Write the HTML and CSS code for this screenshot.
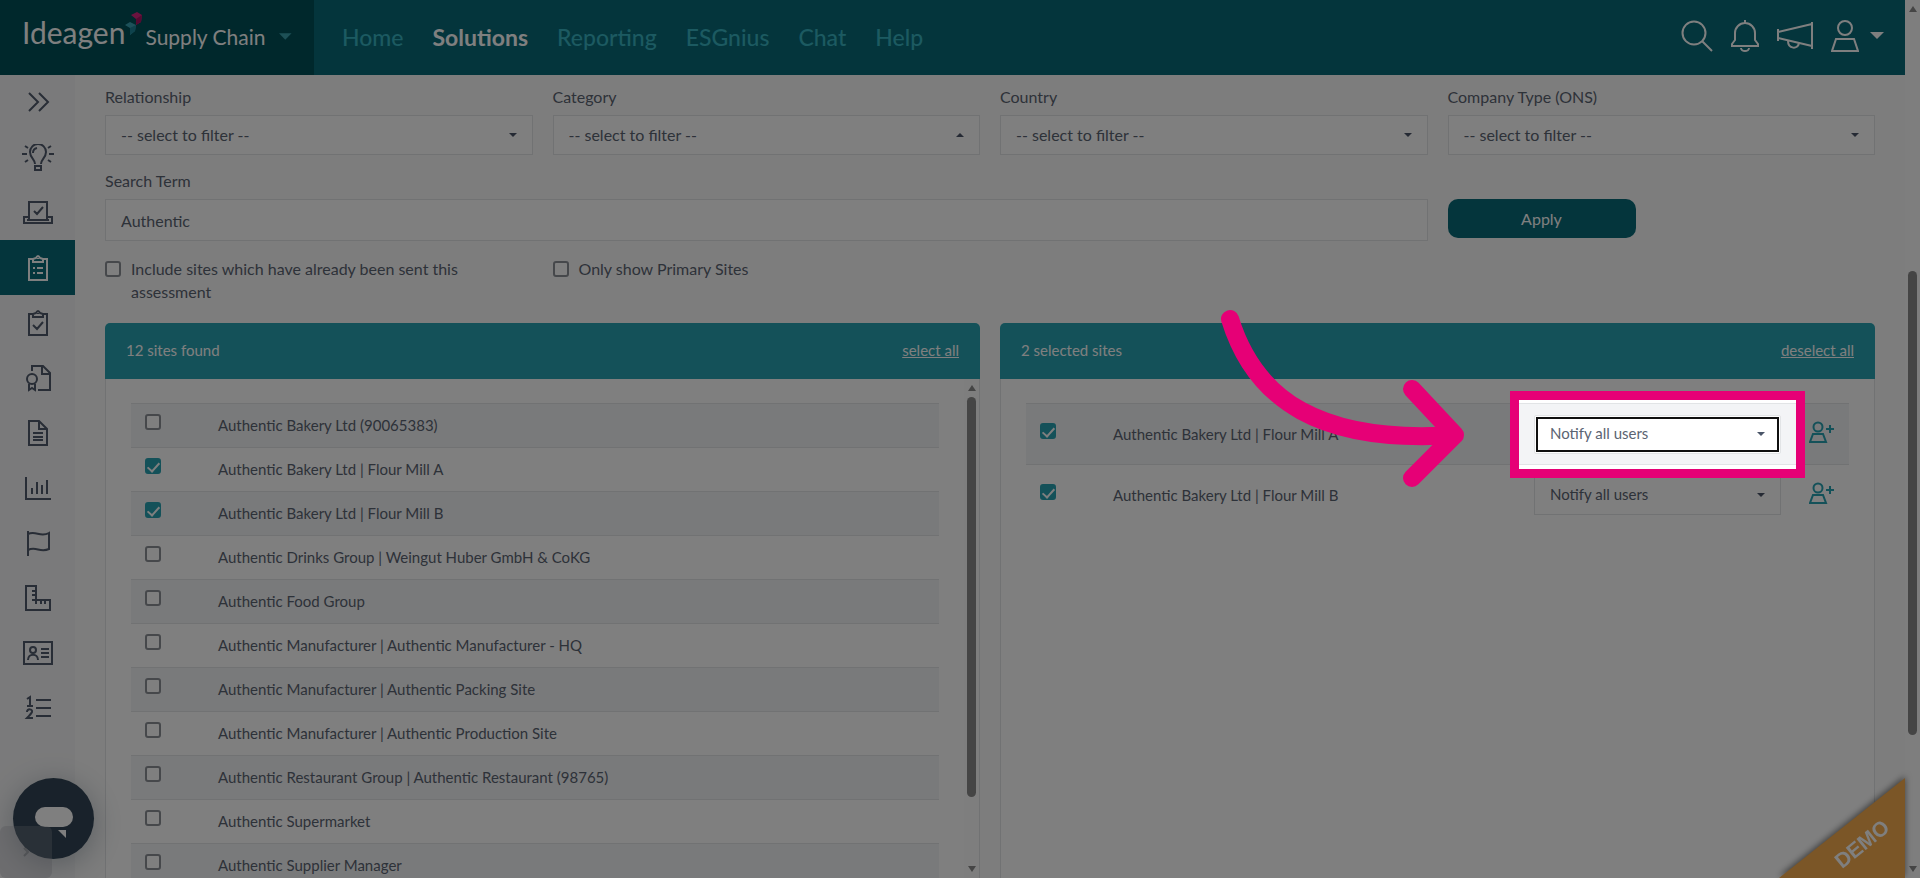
FILE: index.html
```
<!DOCTYPE html>
<html lang="en">
<head>
    <meta charset="UTF-8">
    <meta name="viewport" content="width=device-width, initial-scale=1.0">
    <title>Ideagen Supply Chain</title>
    <link rel="stylesheet" href="styles.css">
</head>
<body>
    <div class="app">
        <header class="topbar">
            <a class="brand" href="#">
                <span class="brand-name">Ideagen</span>
                <svg class="brand-mark" width="18" height="24" viewBox="0 0 18 24">
                    <path d="M6 3l6-3 5 3-1 7-5 3V7z" fill="#d6267f"/>
                    <path d="M11 7l6-4-1 7-5 3z" fill="#a81562"/>
                    <path d="M0 13l5-3 6 3-1 6-5 4v-7z" fill="#3aa3b4"/>
                    <path d="M5 16l6-3-1 6-5 4z" fill="#1d8598"/>
                </svg>
                <span class="brand-product">Supply Chain</span>
                <svg class="brand-caret" width="14" height="7" viewBox="0 0 14 7"><path d="M0 0h14L7 7z" fill="currentColor"/></svg>
            </a>
            <nav class="main-nav">
                <a href="#">Home</a>
                <a href="#" class="current">Solutions</a>
                <a href="#">Reporting</a>
                <a href="#">ESGnius</a>
                <a href="#">Chat</a>
                <a href="#">Help</a>
            </nav>
            <div class="tools">
                <button type="button" aria-label="Search"><svg class="icon" width="32" height="32" viewBox="0 0 32 32"><circle cx="13" cy="13" r="11.5"/><path d="M21 21l10 10"/></svg></button>
                <button type="button" aria-label="Notifications"><svg class="icon" width="28" height="32" viewBox="0 0 28 32"><path d="M14 0v3M4 20v-7a10 10 0 0 1 20 0v7l3 4v2H1v-2z"/><path d="M10 28a4 3 0 0 0 8 0"/></svg></button>
                <button type="button" aria-label="Announcements"><svg class="icon" width="36" height="32" viewBox="0 0 36 32"><path d="M1 9v12M35 2v27M1 12L35 4M1 18l34 8M11 21c0 8 10 9 11 2"/></svg></button>
                <button type="button" aria-label="Account"><svg class="icon" width="28" height="32" viewBox="0 0 28 32"><circle cx="14" cy="8" r="7"/><path d="M5 19h18l4 12H1z"/></svg><svg class="tools-caret" width="14" height="7" viewBox="0 0 14 7"><path d="M0 0h14L7 7z" fill="currentColor"/></svg></button>
            </div>
        </header>

        <div class="workspace">
            <nav class="sidebar">
                <a href="#" aria-label="Expand"><svg class="icon" width="32" height="28" viewBox="0 0 32 28"><path d="M7 4l9 9-9 9M17 4l9 9-9 9"/></svg></a>
                <a href="#" aria-label="Insights"><svg class="icon" width="32" height="28" viewBox="0 0 32 28"><path d="M13 20c0-5-5-6-5-12a8 8 0 0 1 16 0c0 6-5 7-5 12M13 22h6v4h-6zM11 9a5 5 0 0 1 4-5M0 10h5M27 10h5M3 2l3 2M29 2l-3 2M3 18l3-2M29 18l-3-2"/></svg></a>
                <a href="#" aria-label="Assessments"><svg class="icon" width="32" height="28" viewBox="0 0 32 28"><path d="M7 21V3h18v18M6 18H2v6h28v-6h-4M5 21h22M12 12l3 3 6-7"/></svg></a>
                <a href="#" class="active" aria-label="Send assessment"><svg class="icon" width="32" height="28" viewBox="0 0 32 28"><path d="M11 5H7v21h18V5h-4M11 8V5l3-1q2-4 4 0l3 1v3zM11 14h2M15 14h6M11 19h2M15 19h6M16 4v1"/></svg></a>
                <a href="#" aria-label="Tasks"><svg class="icon" width="32" height="28" viewBox="0 0 32 28"><path d="M11 5H7v21h18V5h-4M11 8V5l3-1q2-4 4 0l3 1v3zM11 16l4 4 6-7M16 4v1"/></svg></a>
                <a href="#" aria-label="Certificates"><svg class="icon" width="32" height="28" viewBox="0 0 32 28"><circle cx="10" cy="15" r="5"/><path d="M7 20v6l3-2 3 2v-6M10 7V2h11l7 7v17H16M20 2v8h8"/></svg></a>
                <a href="#" aria-label="Documents"><svg class="icon" width="32" height="28" viewBox="0 0 32 28"><path d="M7 2h10l8 8v16H7zM17 2v8h8M11 14h10M11 18h10M11 21h10"/></svg></a>
                <a href="#" aria-label="Charts"><svg class="icon" width="32" height="28" viewBox="0 0 32 28"><path d="M4 3v22h25M10 20v-6M15 20V8M20 20v-9M25 20V6"/></svg></a>
                <a href="#" aria-label="Flags"><svg class="icon" width="32" height="28" viewBox="0 0 32 28"><path d="M6 2v25M6 5c8-4 12 4 21-1v16c-9 4-13-3-21 1"/></svg></a>
                <a href="#" aria-label="Measures"><svg class="icon" width="32" height="28" viewBox="0 0 32 28"><path d="M4 2h10v14h14v10H4zM14 16v4M14 16h-4M14 7h-4M14 11h-4M19 16v4M23 16v4"/></svg></a>
                <a href="#" aria-label="Contacts"><svg class="icon" width="32" height="28" viewBox="0 0 32 28"><path d="M2 3h28v22H2zM6 21c0-7 10-7 10 0M19 10h8M19 14h8M19 18h8"/><circle cx="11" cy="11" r="3"/></svg></a>
                <a href="#" aria-label="Order"><svg class="icon" width="32" height="28" viewBox="0 0 32 28"><path d="M5 5l3-2v9M5 12h6M5 18c0-4 6-3 5 0q-1 2-5 6h6M14 6h15M14 14h15M14 22h15"/></svg></a>
            </nav>

            <main class="content">
                <form class="filters">
                    <div class="field">
                        <label for="relationship">Relationship</label>
                        <span class="select"><select id="relationship"><option>-- select to filter --</option></select></span>
                    </div>
                    <div class="field">
                        <label for="category">Category</label>
                        <span class="select select-open"><select id="category"><option>-- select to filter --</option></select></span>
                    </div>
                    <div class="field">
                        <label for="country">Country</label>
                        <span class="select"><select id="country"><option>-- select to filter --</option></select></span>
                    </div>
                    <div class="field">
                        <label for="company-type">Company Type (ONS)</label>
                        <span class="select"><select id="company-type"><option>-- select to filter --</option></select></span>
                    </div>
                    <div class="field field-search">
                        <label for="search-term">Search Term</label>
                        <input type="text" id="search-term" value="Authentic">
                    </div>
                    <button type="button" class="apply">Apply</button>
                    <label class="check"><input type="checkbox"><span>Include sites which have already been sent this assessment</span></label>
                    <label class="check"><input type="checkbox"><span>Only show Primary Sites</span></label>
                </form>

                <div class="panels">
                    <section class="panel">
                        <div class="panel-head"><span>12 sites found</span><a href="#">select all</a></div>
                        <div class="panel-body scrolled">
                            <div class="list">
                                <table class="sites">
                                    <tr><td class="pick"><input type="checkbox" id="s1"></td><td><label for="s1">Authentic Bakery Ltd (90065383)</label></td></tr>
                                    <tr><td class="pick"><input type="checkbox" id="s2" checked></td><td><label for="s2">Authentic Bakery Ltd | Flour Mill A</label></td></tr>
                                    <tr><td class="pick"><input type="checkbox" id="s3" checked></td><td><label for="s3">Authentic Bakery Ltd | Flour Mill B</label></td></tr>
                                    <tr><td class="pick"><input type="checkbox" id="s4"></td><td><label for="s4">Authentic Drinks Group | Weingut Huber GmbH &amp; CoKG</label></td></tr>
                                    <tr><td class="pick"><input type="checkbox" id="s5"></td><td><label for="s5">Authentic Food Group</label></td></tr>
                                    <tr><td class="pick"><input type="checkbox" id="s6"></td><td><label for="s6">Authentic Manufacturer | Authentic Manufacturer - HQ</label></td></tr>
                                    <tr><td class="pick"><input type="checkbox" id="s7"></td><td><label for="s7">Authentic Manufacturer | Authentic Packing Site</label></td></tr>
                                    <tr><td class="pick"><input type="checkbox" id="s8"></td><td><label for="s8">Authentic Manufacturer | Authentic Production Site</label></td></tr>
                                    <tr><td class="pick"><input type="checkbox" id="s9"></td><td><label for="s9">Authentic Restaurant Group | Authentic Restaurant (98765)</label></td></tr>
                                    <tr><td class="pick"><input type="checkbox" id="s10"></td><td><label for="s10">Authentic Supermarket</label></td></tr>
                                    <tr><td class="pick"><input type="checkbox" id="s11"></td><td><label for="s11">Authentic Supplier Manager</label></td></tr>
                                </table>
                            </div>
                            <div class="scrollbar list-scroll"><i class="arrow-up"></i><div class="track"><div class="thumb"></div></div><i class="arrow-down"></i></div>
                        </div>
                    </section>

                    <section class="panel">
                        <div class="panel-head"><span>2 selected sites</span><a href="#">deselect all</a></div>
                        <div class="panel-body">
                            <div class="selected">
                                <table class="sites">
                                    <tr>
                                        <td class="pick"><input type="checkbox" id="p1" checked></td>
                                        <td><label for="p1">Authentic Bakery Ltd | Flour Mill A</label></td>
                                        <td class="notify">
                                            <span class="select select-focus">
                                                <select aria-label="Notify for Flour Mill A"><option>Notify all users</option></select>
                                                <span class="spotlight"></span>
                                                <svg class="pointer" width="265" height="190" viewBox="0 0 265 190"><path d="M20 14C45 95 110 139 245 130M202 84l43 46-43 43"/></svg>
                                            </span>
                                        </td>
                                        <td class="add"><button type="button" aria-label="Add user"><svg class="icon" width="25" height="22" viewBox="0 0 25 22"><circle cx="9" cy="6" r="4.5"/><path d="M4 13h10l3 8H1zM17 8h8M21 4v8"/></svg></button></td>
                                    </tr>
                                    <tr>
                                        <td class="pick"><input type="checkbox" id="p2" checked></td>
                                        <td><label for="p2">Authentic Bakery Ltd | Flour Mill B</label></td>
                                        <td class="notify"><span class="select"><select aria-label="Notify for Flour Mill B"><option>Notify all users</option></select></span></td>
                                        <td class="add"><button type="button" aria-label="Add user"><svg class="icon" width="25" height="22" viewBox="0 0 25 22"><circle cx="9" cy="6" r="4.5"/><path d="M4 13h10l3 8H1zM17 8h8M21 4v8"/></svg></button></td>
                                    </tr>
                                </table>
                            </div>
                        </div>
                    </section>
                </div>
            </main>
        </div>

        <button type="button" class="chat" aria-label="Open chat">
            <svg width="38" height="32" viewBox="0 0 38 32"><rect width="38" height="20" rx="10"/><path d="M23 23h8v8z"/></svg>
        </button>
        <div class="drawer"><svg class="icon" width="6" height="10" viewBox="0 0 6 10"><path d="M1 1l4 4-4 4"/></svg></div>
        <svg class="ribbon" width="134" height="108" viewBox="0 0 134 108">
            <path d="M8 108L134 8v100z"/>
            <text x="91" y="81" transform="rotate(-39 91 74)">DEMO</text>
        </svg>
    </div>
    <div class="scrollbar page-scroll"><i class="arrow-up"></i><div class="track"><div class="thumb"></div></div><i class="arrow-down"></i></div>
</body>
</html>
```
FILE: styles.css
```
* {
    box-sizing: border-box;
}
body {
    margin: 0;
    height: 100vh;
    display: flex;
    overflow: hidden;
    font-family: Lato, "Open Sans", sans-serif;
    font-size: 16px;
    line-height: 23px;
    color: #5b6472;
    background: #fbfbfb;
}
button, input, select {
    font: inherit;
    color: inherit;
}
button {
    border: none;
    background: none;
    padding: 0;
    cursor: pointer;
}
.icon {
    fill: none;
    stroke: currentColor;
    stroke-width: 2;
    display: block;
}
.app {
    flex: 1;
    min-width: 0;
    display: flex;
    flex-direction: column;
    position: relative;
}

/* top bar */
.topbar {
    height: 75px;
    flex: none;
    display: flex;
    background: #086a78;
}
.brand {
    width: 314px;
    padding: 0 22px 10px;
    display: flex;
    align-items: center;
    background: #005058;
    color: #fff;
    text-decoration: none;
    white-space: nowrap;
}
.brand-name {
    font-size: 30px;
}
.brand-mark {
    flex: none;
    margin-bottom: 18px;
}
.brand-product {
    font-size: 21px;
    margin: 8px 14px 0 2px;
}
.brand-caret {
    color: #3aa0ad;
    margin-top: 8px;
}
.main-nav {
    flex: 1;
    display: flex;
    align-items: center;
    gap: 29px;
    padding-left: 28px;
    font-size: 23px;
    font-weight: 500;
}
.main-nav a {
    color: #38b4c2;
    text-decoration: none;
}
.main-nav .current {
    color: #fff;
    font-weight: bold;
}
.tools {
    display: flex;
    align-items: center;
    gap: 18px;
    padding: 0 21px 4px 0;
    color: #fff;
}
.tools button {
    display: flex;
    align-items: center;
    gap: 11px;
}

/* sidebar */
.workspace {
    flex: 1;
    min-height: 0;
    display: flex;
}
.sidebar {
    width: 75px;
    flex: none;
    background: #f5f5f6;
}
.sidebar a {
    height: 55px;
    display: flex;
    align-items: center;
    justify-content: center;
    color: #505a6c;
}
.sidebar .active {
    background: #086a78;
    color: #fff;
}

/* filters */
.content {
    flex: 1;
    min-width: 0;
    display: flex;
    flex-direction: column;
    padding: 10px 30px 0;
}
.filters {
    display: grid;
    grid-template-columns: repeat(4, 1fr);
    gap: 14px 20px;
}
.field label {
    display: block;
    margin-bottom: 7px;
}
.field-search {
    grid-column: span 3;
}
.field input {
    width: 100%;
    height: 42px;
    padding: 0 15px;
    border: 1px solid #e2e4e6;
    background: #fff;
    display: block;
}
.select {
    position: relative;
    display: block;
}
.select select {
    width: 100%;
    height: 40px;
    padding: 0 15px 2px;
    border: 1px solid #e2e4e6;
    border-radius: 0;
    background: #fff;
    appearance: none;
    display: block;
}
.select::after {
    content: "";
    position: absolute;
    right: 16px;
    top: 50%;
    margin-top: -2px;
    border: 4px solid transparent;
    border-top-color: #4a5568;
    border-bottom: 0;
}
.select-open::after {
    border-top: 0;
    border-bottom: 4px solid #4a5568;
}
.apply {
    width: 188px;
    height: 39px;
    margin-top: 30px;
    border-radius: 10px;
    background: #086a78;
    color: #fff;
}
.check {
    display: flex;
    gap: 10px;
    padding: 2px 40px 0 0;
}
.check input {
    margin: 4px 0 0;
}
input[type="checkbox"] {
    appearance: none;
    flex: none;
    width: 16px;
    height: 16px;
    border: 2px solid #8c9097;
    border-radius: 3px;
    background: #fff;
}
input[type="checkbox"]:checked {
    border-color: #28a3b3;
    background: #28a3b3;
    display: inline-grid;
    place-items: center;
}
input[type="checkbox"]:checked::after {
    content: "";
    width: 5px;
    height: 10px;
    border: solid #fff;
    border-width: 0 2px 2px 0;
    transform: rotate(42deg);
    margin-bottom: 3px;
}

/* site panels */
.panels {
    flex: 1;
    min-height: 0;
    display: grid;
    grid-template-columns: 1fr 1fr;
    gap: 20px;
    margin-top: 20px;
    font-size: 15px;
}
.panel {
    min-height: 0;
    display: flex;
    flex-direction: column;
}
.panel-head {
    height: 56px;
    flex: none;
    padding: 0 21px 2px;
    display: flex;
    align-items: center;
    justify-content: space-between;
    background: #28a3b3;
    border-radius: 5px 5px 0 0;
    color: #fff;
}
.panel-head a {
    color: #fff;
}
.panel-body {
    flex: 1;
    min-height: 0;
    border: solid #e2e4e6;
    border-width: 0 1px;
    background: #fff;
}
.scrolled {
    display: flex;
    overflow: hidden;
}
.list, .selected {
    flex: 1;
    padding: 24px 25px 0;
}
.sites {
    width: 100%;
    table-layout: fixed;
    border-collapse: collapse;
}
.sites td {
    height: 44px;
    padding: 0 14px;
    border-top: 1px solid #e2e4e6;
}
.sites tr:nth-child(odd) {
    background: #f3f4f6;
}
.sites .pick {
    width: 73px;
}
.pick input {
    margin: 0 0 7px;
    display: block;
}
.pick input:checked {
    display: grid;
}
.selected .sites td {
    height: 61px;
}
.sites .notify {
    width: 275px;
}
.notify select {
    height: 39px;
}
.sites .add {
    width: 54px;
}
.add button {
    color: #28a3b3;
    margin-bottom: 4px;
    display: block;
}
.select-focus select {
    outline: 2px solid #101010;
    outline-offset: -4px;
    border-radius: 2px;
}

/* guide overlay */
.spotlight {
    position: absolute;
    inset: -24px;
    z-index: 10;
    border: 9px solid #e60076;
    box-shadow: 0 0 0 4000px rgba(0,0,0,0.5);
    pointer-events: none;
}
.pointer {
    position: absolute;
    right: calc(100% + 59px);
    top: -110px;
    z-index: 11;
    fill: none;
    stroke: #e60076;
    stroke-width: 18;
    stroke-linecap: round;
    stroke-linejoin: round;
    pointer-events: none;
}

/* scrollbars */
.scrollbar {
    width: 15px;
    flex: none;
    display: flex;
    flex-direction: column;
    align-items: center;
    padding: 6px 0;
    background: #fcfcfc;
}
.arrow-up, .arrow-down {
    border: 4px solid transparent;
}
.arrow-up {
    border-top: 0;
    border-bottom: 6px solid #8b8b8b;
}
.arrow-down {
    border-bottom: 0;
    border-top: 6px solid #8b8b8b;
}
.track {
    flex: 1;
    width: 9px;
    margin: 6px 0 4px;
    display: flex;
    flex-direction: column;
}
.thumb {
    border-radius: 5px;
    background: #8b8b8b;
}
.list-scroll .thumb {
    height: 86%;
}
.page-scroll .track::before {
    content: "";
    height: 30%;
}
.page-scroll .thumb {
    height: 55%;
}

/* floating widgets */
.chat {
    position: absolute;
    left: 13px;
    bottom: 19px;
    width: 81px;
    height: 81px;
    padding-top: 8px;
    border-radius: 50%;
    background: #324556;
    box-shadow: 0 6px 30px rgba(50,69,86,0.35);
    display: flex;
    align-items: center;
    justify-content: center;
}
.chat svg {
    fill: #fff;
}
.drawer {
    position: absolute;
    left: 0;
    bottom: 0;
    width: 52px;
    height: 52px;
    border-radius: 6px;
    background: rgba(160,160,170,0.3);
    color: #a0a4aa;
    display: flex;
    align-items: center;
    justify-content: center;
}
.ribbon {
    position: absolute;
    right: 0;
    bottom: 0;
    fill: #f6ac4e;
    filter: drop-shadow(0 -2px 3px rgba(0,0,0,0.5));
}
.ribbon text {
    fill: #fff;
    font: bold 21px "Liberation Sans", sans-serif;
    text-anchor: middle;
}
```
